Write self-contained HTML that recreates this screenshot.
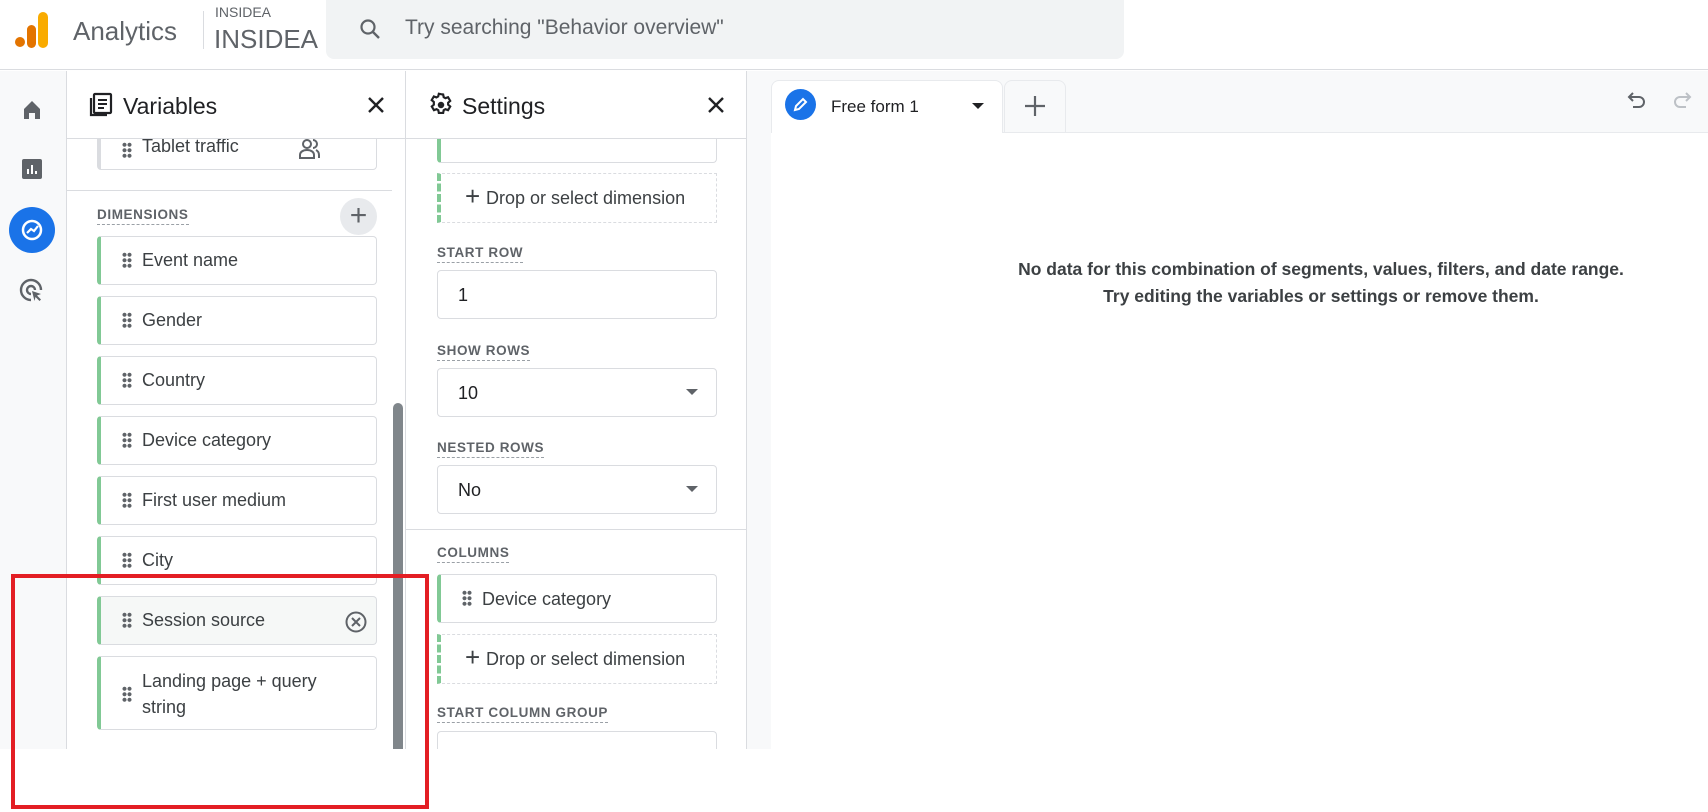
<!DOCTYPE html>
<html><head><meta charset="utf-8"><style>
*{box-sizing:border-box;margin:0;padding:0}
body{width:1708px;height:812px;background:#fff;font-family:"Liberation Sans",Arial,sans-serif;color:#202124;position:relative;overflow:hidden}
.a{position:absolute}
.card{position:absolute;left:97px;width:280px;height:49px;border:1px solid #dadce0;border-left:4px solid #81c995;border-radius:4px;background:#fff;font-size:18px;color:#3c4043}
.card .t{position:absolute;left:41px;top:13px}
.dots{position:absolute;left:21px;top:15px;width:10px;height:16px;background:radial-gradient(circle,#5f6368 1.8px,transparent 2.2px) 0 0/5px 5.5px}
.lbl{position:absolute;font-size:13.5px;letter-spacing:.6px;color:#5f6368;font-weight:bold;border-bottom:1px dashed #9aa0a6;padding-bottom:2px}
.box{position:absolute;left:437px;width:280px;height:49px;border:1px solid #dadce0;border-radius:4px;background:#fff;font-size:18px;color:#202124}
.drop{position:absolute;left:437px;width:280px;height:50px;border:1px dashed #dadce0;border-left:4px dashed #81c995;font-size:18px;color:#3c4043}
.arr{position:absolute;right:18px;top:20px;border-left:6px solid transparent;border-right:6px solid transparent;border-top:6px solid #5f6368}
</style></head><body>
<!-- header -->
<div class="a" style="left:0;top:0;width:1708px;height:70px;border-bottom:1px solid #dadce0"></div>
<div class="a" style="left:15px;top:37px;width:10px;height:10px;border-radius:50%;background:#e37400"></div>
<div class="a" style="left:27px;top:25px;width:9px;height:23px;border-radius:5px;background:#e37400"></div>
<div class="a" style="left:38px;top:12px;width:10px;height:36px;border-radius:5px;background:#f9ab00"></div>
<div class="a" style="left:73px;top:16px;font-size:26px;color:#5f6368">Analytics</div>
<div class="a" style="left:203px;top:11px;width:1px;height:38px;background:#dadce0"></div>
<div class="a" style="left:215px;top:4px;font-size:14px;color:#5f6368">INSIDEA</div>
<div class="a" style="left:214px;top:24px;font-size:26px;color:#5f6368">INSIDEA</div>
<div class="a" style="left:326px;top:0;width:798px;height:59px;background:#f1f3f4;border-radius:0 0 8px 8px"></div>
<svg class="a" style="left:358px;top:17px" width="24" height="24" viewBox="0 0 24 24"><circle cx="10" cy="10" r="6.5" fill="none" stroke="#5f6368" stroke-width="2.2"/><path d="M15 15l6 6" stroke="#5f6368" stroke-width="2.4"/></svg>
<div class="a" style="left:405px;top:16px;font-size:21px;color:#5f6368">Try searching "Behavior overview"</div>
<!-- left nav -->
<div class="a" style="left:0;top:71px;width:67px;height:678px;background:#f8f9fa;border-right:1px solid #dadce0"></div>
<svg class="a" style="left:20px;top:98px" width="24" height="24" viewBox="0 0 24 24"><path d="M4 11L12 3l8 8v10h-5v-6H9v6H4z" fill="#5f6368"/></svg>
<svg class="a" style="left:20px;top:157px" width="24" height="24" viewBox="0 0 24 24"><rect x="2" y="2" width="20" height="20" rx="2" fill="#5f6368"/><path d="M8 17v-5M12 17V8M16 17v-3" stroke="#fff" stroke-width="2"/></svg>
<div class="a" style="left:9px;top:207px;width:46px;height:46px;border-radius:50%;background:#1a73e8"></div>
<svg class="a" style="left:19px;top:217px" width="26" height="26" viewBox="0 0 26 26"><circle cx="13" cy="13" r="9" fill="none" stroke="#fff" stroke-width="2.5"/><path d="M8 16l4-4 3 2 4-5" fill="none" stroke="#fff" stroke-width="2.2"/></svg>
<svg class="a" style="left:19px;top:278px" width="26" height="26" viewBox="0 0 26 26"><path d="M12 22A10 10 0 1 1 22 12" fill="none" stroke="#5f6368" stroke-width="2.4"/><path d="M12 16a4 4 0 1 1 4-4" fill="none" stroke="#5f6368" stroke-width="2.4"/><path d="M13 13l9 3-4 1.5 4 4-1.5 1.5-4-4-1 4z" fill="#5f6368"/></svg>
<!-- variables panel -->
<div class="a" style="left:67px;top:71px;width:339px;height:678px;background:#fff;border-right:1px solid #dadce0"></div>
<div class="a" style="left:67px;top:138px;width:339px;height:1px;background:#dadce0"></div>
<svg class="a" style="left:88px;top:92px" width="26" height="26" viewBox="0 0 26 26"><rect x="6" y="2" width="17" height="19" rx="1" fill="none" stroke="#202124" stroke-width="2.2"/><path d="M3 6v17h16" fill="none" stroke="#202124" stroke-width="2.2"/><path d="M10 8h9M10 12h9M10 16h6" stroke="#202124" stroke-width="2"/></svg>
<div class="a" style="left:123px;top:93px;font-size:23px;color:#202124">Variables</div>
<svg class="a" style="left:364px;top:93px" width="24" height="24" viewBox="0 0 24 24"><path d="M5 5l14 14M19 5L5 19" stroke="#202124" stroke-width="2.4"/></svg>
<div class="a" style="left:67px;top:139px;width:325px;height:610px;overflow:hidden">
 <div class="card" style="left:30px;top:-20px;border-left:4px solid #dadce0;height:51px"><div class="dots" style="top:22px"></div><div class="t" style="top:16px">Tablet traffic</div>
 <svg style="position:absolute;left:196px;top:17px" width="24" height="24" viewBox="0 0 24 24"><circle cx="10" cy="7" r="4" fill="none" stroke="#5f6368" stroke-width="2"/><path d="M3 21v-3c0-3 3-5 7-5s7 2 7 5v3z" fill="none" stroke="#5f6368" stroke-width="2"/><path d="M16 3a4 4 0 0 1 0 8M19 13c2 1 3 3 3 5v3" fill="none" stroke="#5f6368" stroke-width="2"/></svg></div>
</div>
<div class="a" style="left:67px;top:190px;width:325px;height:1px;background:#dadce0"></div>
<div class="lbl" style="left:97px;top:207px">DIMENSIONS</div>
<div class="a" style="left:340px;top:198px;width:37px;height:37px;border-radius:50%;background:#e8eaed;font-size:30px;line-height:35px;text-align:center;color:#5f6368">+</div>
<div class="card" style="top:236px"><div class="dots"></div><div class="t">Event name</div></div>
<div class="card" style="top:296px"><div class="dots"></div><div class="t">Gender</div></div>
<div class="card" style="top:356px"><div class="dots"></div><div class="t">Country</div></div>
<div class="card" style="top:416px"><div class="dots"></div><div class="t">Device category</div></div>
<div class="card" style="top:476px"><div class="dots"></div><div class="t">First user medium</div></div>
<div class="card" style="top:536px"><div class="dots"></div><div class="t">City</div></div>
<div class="card" style="top:596px;background:#f6f8f7"><div class="dots"></div><div class="t">Session source</div>
<svg style="position:absolute;left:243px;top:13px" width="24" height="24" viewBox="0 0 24 24"><circle cx="12" cy="12" r="9.5" fill="none" stroke="#5f6368" stroke-width="2"/><path d="M8 8l8 8M16 8l-8 8" stroke="#5f6368" stroke-width="2"/></svg></div>
<div class="card" style="top:656px;height:74px"><div class="dots" style="top:29px"></div><div class="t" style="top:11px;line-height:26px">Landing page + query<br>string</div></div>
<div class="a" style="left:393px;top:403px;width:10px;height:346px;background:#80868b;border-radius:5px 5px 0 0"></div>
<!-- settings panel -->
<div class="a" style="left:406px;top:71px;width:341px;height:678px;background:#fff;border-right:1px solid #dadce0"></div>
<svg class="a" style="left:428px;top:92px" width="26" height="26" viewBox="0 0 24 24"><path d="M12 2l2 .3.5 2.5 1.6.9 2.4-.9 2 3.4-1.9 1.7v1.8l1.9 1.7-2 3.4-2.4-.9-1.6.9-.5 2.5h-4l-.5-2.5-1.6-.9-2.4.9-2-3.4 1.9-1.7V9.2L3.4 7.5l2-3.4 2.4.9 1.6-.9L10 1.6z" fill="none" stroke="#202124" stroke-width="2"/><circle cx="12" cy="12" r="3" fill="#202124"/></svg>
<div class="a" style="left:462px;top:93px;font-size:23px;color:#202124">Settings</div>
<svg class="a" style="left:704px;top:93px" width="24" height="24" viewBox="0 0 24 24"><path d="M5 5l14 14M19 5L5 19" stroke="#202124" stroke-width="2.4"/></svg>
<div class="a" style="left:406px;top:138px;width:341px;height:1px;background:#dadce0"></div>
<div class="a" style="left:437px;top:139px;width:280px;height:24px;border:1px solid #dadce0;border-top:none;border-left:4px solid #81c995;border-radius:0 0 4px 4px"></div>
<div class="drop" style="top:173px"><div class="a" style="left:24px;top:9px;font-size:26px;color:#3c4043;line-height:26px">+</div><div class="a" style="left:45px;top:14px">Drop or select dimension</div></div>
<div class="lbl" style="left:437px;top:245px">START ROW</div>
<div class="box" style="top:270px"><div class="a" style="left:20px;top:14px">1</div></div>
<div class="lbl" style="left:437px;top:343px">SHOW ROWS</div>
<div class="box" style="top:368px"><div class="a" style="left:20px;top:14px">10</div><div class="arr"></div></div>
<div class="lbl" style="left:437px;top:440px">NESTED ROWS</div>
<div class="box" style="top:465px"><div class="a" style="left:20px;top:14px">No</div><div class="arr"></div></div>
<div class="a" style="left:406px;top:529px;width:341px;height:1px;background:#dadce0"></div>
<div class="lbl" style="left:437px;top:545px">COLUMNS</div>
<div class="box" style="top:574px;border-left:4px solid #81c995"><div class="dots"></div><div class="a" style="left:41px;top:14px;color:#3c4043">Device category</div></div>
<div class="drop" style="top:634px"><div class="a" style="left:24px;top:9px;font-size:26px;color:#3c4043;line-height:26px">+</div><div class="a" style="left:45px;top:14px">Drop or select dimension</div></div>
<div class="lbl" style="left:437px;top:705px">START COLUMN GROUP</div>
<div class="a" style="left:437px;top:731px;width:280px;height:18px;border:1px solid #dadce0;border-bottom:none;border-radius:4px 4px 0 0"></div>
<!-- content -->
<div class="a" style="left:747px;top:71px;width:961px;height:678px;background:#f8f9fa"></div>
<div class="a" style="left:771px;top:132px;width:937px;height:617px;background:#fff;border-top:1px solid #e8eaed"></div>
<div class="a" style="left:771px;top:80px;width:232px;height:53px;background:#fff;border-radius:8px 8px 0 0;border:1px solid #e8eaed;border-bottom:none"></div>
<div class="a" style="left:785px;top:89px;width:31px;height:31px;border-radius:50%;background:#1a73e8"></div>
<svg class="a" style="left:792px;top:96px" width="17" height="17" viewBox="0 0 17 17"><path d="M3 14l1-4 7-7 3 3-7 7z" fill="none" stroke="#fff" stroke-width="2"/></svg>
<div class="a" style="left:831px;top:97px;font-size:17px;color:#202124">Free form 1</div>
<div class="a" style="left:972px;top:103px;border-left:6px solid transparent;border-right:6px solid transparent;border-top:6px solid #202124"></div>
<div class="a" style="left:1004px;top:80px;width:62px;height:52px;background:#f8f9fa;border:1px solid #e8eaed;border-bottom:none;border-radius:8px 8px 0 0"></div>
<svg class="a" style="left:1022px;top:93px" width="26" height="26" viewBox="0 0 26 26"><path d="M13 3v20M3 13h20" stroke="#5f6368" stroke-width="2.2"/></svg>
<svg class="a" style="left:1626px;top:89px" width="22" height="24" viewBox="0 0 22 24"><path d="M7 4L3 8l4 4" fill="none" stroke="#5f6368" stroke-width="2"/><path d="M3 8h10a5 5 0 0 1 0 10H7" fill="none" stroke="#5f6368" stroke-width="2"/></svg>
<svg class="a" style="left:1671px;top:89px" width="22" height="24" viewBox="0 0 22 24"><path d="M15 4l4 4-4 4" fill="none" stroke="#bdc1c6" stroke-width="2"/><path d="M19 8H9a5 5 0 0 0 0 10h6" fill="none" stroke="#bdc1c6" stroke-width="2"/></svg>
<div class="a" style="left:771px;top:256px;width:1100px;text-align:center;font-size:17.5px;font-weight:bold;color:#3c4043;line-height:27px">No data for this combination of segments, values, filters, and date range.<br>Try editing the variables or settings or remove them.</div>
<!-- red box -->
<div class="a" style="left:11px;top:574px;width:418px;height:235px;border:4px solid #e31e24"></div>
</body></html>
